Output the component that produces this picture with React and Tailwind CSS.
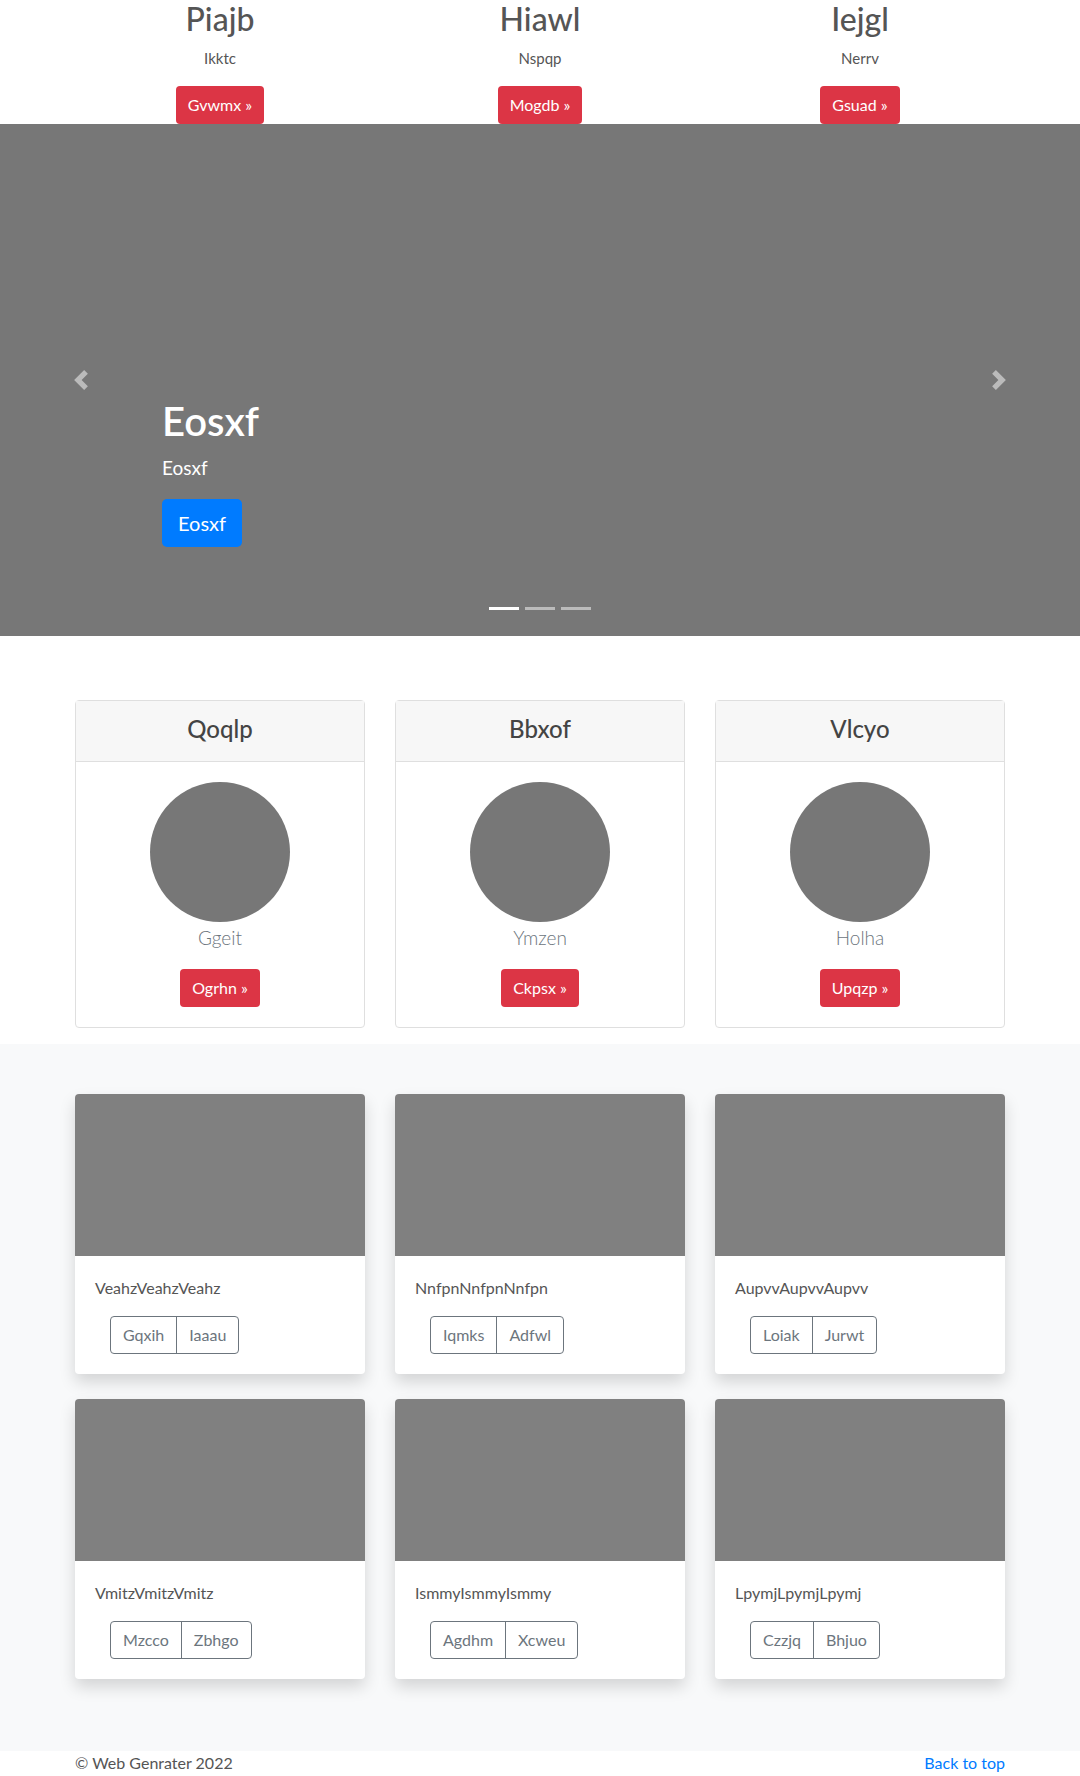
const font = { fontFamily: '"Lato", "Open Sans", sans-serif' };

const tops = [
  { title: "Piajb", text: "Ikktc", btn: "Gvwmx" },
  { title: "Hiawl", text: "Nspqp", btn: "Mogdb" },
  { title: "Iejgl", text: "Nerrv", btn: "Gsuad" },
];

const people = [
  { title: "Qoqlp", name: "Ggeit", btn: "Ogrhn" },
  { title: "Bbxof", name: "Ymzen", btn: "Ckpsx" },
  { title: "Vlcyo", name: "Holha", btn: "Upqzp" },
];

const albums = [
  { text: "VeahzVeahzVeahz", a: "Gqxih", b: "Iaaau" },
  { text: "NnfpnNnfpnNnfpn", a: "Iqmks", b: "Adfwl" },
  { text: "AupvvAupvvAupvv", a: "Loiak", b: "Jurwt" },
  { text: "VmitzVmitzVmitz", a: "Mzcco", b: "Zbhgo" },
  { text: "IsmmyIsmmyIsmmy", a: "Agdhm", b: "Xcweu" },
  { text: "LpymjLpymjLpymj", a: "Czzjq", b: "Bhjuo" },
];

const RedButton = ({ children }) => (
  <span className="inline-block h-[38px] px-3 rounded-[4px] bg-[#dc3545] text-white text-[16px] leading-[38px]">
    {children} »
  </span>
);

const Chevron = ({ dir }) => (
  <svg width="20" height="20" viewBox="0 0 8 8" fill="#ffffff" fillOpacity="0.5">
    {dir === "prev" ? (
      <path d="M5.25 0l-4 4 4 4 1.5-1.5L4.25 4l2.5-2.5L5.25 0z" />
    ) : (
      <path d="M2.75 0l-1.5 1.5L3.75 4l-2.5 2.5L2.75 8l4-4-4-4z" />
    )}
  </svg>
);

export default function App() {
  return (
    <div className="w-[1080px] h-[1776px] overflow-hidden bg-white text-[#555]" style={font}>
      {/* top columns */}
      <div className="w-[930px] mx-auto grid grid-cols-3 gap-[30px]">
        {tops.map((t) => (
          <div key={t.title} className="text-center">
            <h2 className="text-[32px] leading-[38px] font-medium mb-2 text-[#555]">{t.title}</h2>
            <p className="text-[15px] leading-[24px] mb-4">{t.text}</p>
            <RedButton>{t.btn}</RedButton>
          </div>
        ))}
      </div>

      {/* carousel */}
      <div className="relative h-[512px] bg-[#777]">
        <div className="absolute left-0 top-0 h-full w-[15%] flex items-center justify-center">
          <Chevron dir="prev" />
        </div>
        <div className="absolute right-0 top-0 h-full w-[15%] flex items-center justify-center">
          <Chevron dir="next" />
        </div>
        <div className="absolute left-[162px] top-[273px] text-white">
          <h1 className="text-[40px] leading-[48px] font-semibold mb-2">Eosxf</h1>
          <p className="text-[19px] leading-[30px] mb-4">Eosxf</p>
          <span className="inline-block h-[48px] px-4 rounded-[5px] bg-[#007bff] text-[20px] leading-[48px]">
            Eosxf
          </span>
        </div>
        <div className="absolute bottom-[26px] left-0 right-0 flex justify-center gap-[6px]">
          <span className="w-[30px] h-[3px] bg-white" />
          <span className="w-[30px] h-[3px] bg-white/50" />
          <span className="w-[30px] h-[3px] bg-white/50" />
        </div>
      </div>

      {/* marketing cards */}
      <div className="w-[930px] mx-auto mt-16 grid grid-cols-3 gap-[30px]">
        {people.map((p) => (
          <div key={p.title} className="border border-[#dfdfdf] rounded-[4px] text-center">
            <div className="h-[61px] pb-1 bg-[#f7f7f7] border-b border-[#dfdfdf] flex items-center justify-center">
              <h4 className="text-[24px] font-medium text-[#444]">{p.title}</h4>
            </div>
            <div className="pt-5 pb-5">
              <div className="w-[140px] h-[140px] rounded-full bg-[#777] mx-auto" />
              <p className="text-[19px] leading-[30px] font-light text-[#6c757d] mt-px mb-4">{p.name}</p>
              <RedButton>{p.btn}</RedButton>
            </div>
          </div>
        ))}
      </div>

      {/* album */}
      <div className="mt-4 bg-[#f8f9fa] pt-[50px] pb-[72px]">
        <div className="w-[930px] mx-auto grid grid-cols-3 gap-x-[30px] gap-y-[25px]">
          {albums.map((a) => (
            <div
              key={a.text}
              className="bg-white rounded-[4px] overflow-hidden shadow-[0_8px_16px_rgba(0,0,0,0.15)]"
            >
              <div className="h-[162px] bg-[#808080]" />
              <div className="p-5">
                <p className="text-[16px] leading-[24px] text-[#555] mb-4">{a.text}</p>
                <div className="ml-[15px] inline-flex h-[38px] border border-[#6c757d] rounded-[4px] text-[#6c757d] text-[16px] leading-[36px]">
                  <span className="px-3">{a.a}</span>
                  <span className="px-3 border-l border-[#6c757d]">{a.b}</span>
                </div>
              </div>
            </div>
          ))}
        </div>
      </div>

      {/* footer */}
      <div className="w-[930px] mx-auto flex justify-between text-[16px] leading-[24px]">
        <p className="text-[#555]">© Web Genrater 2022</p>
        <p className="text-[#007bff]">Back to top</p>
      </div>
    </div>
  );
}
